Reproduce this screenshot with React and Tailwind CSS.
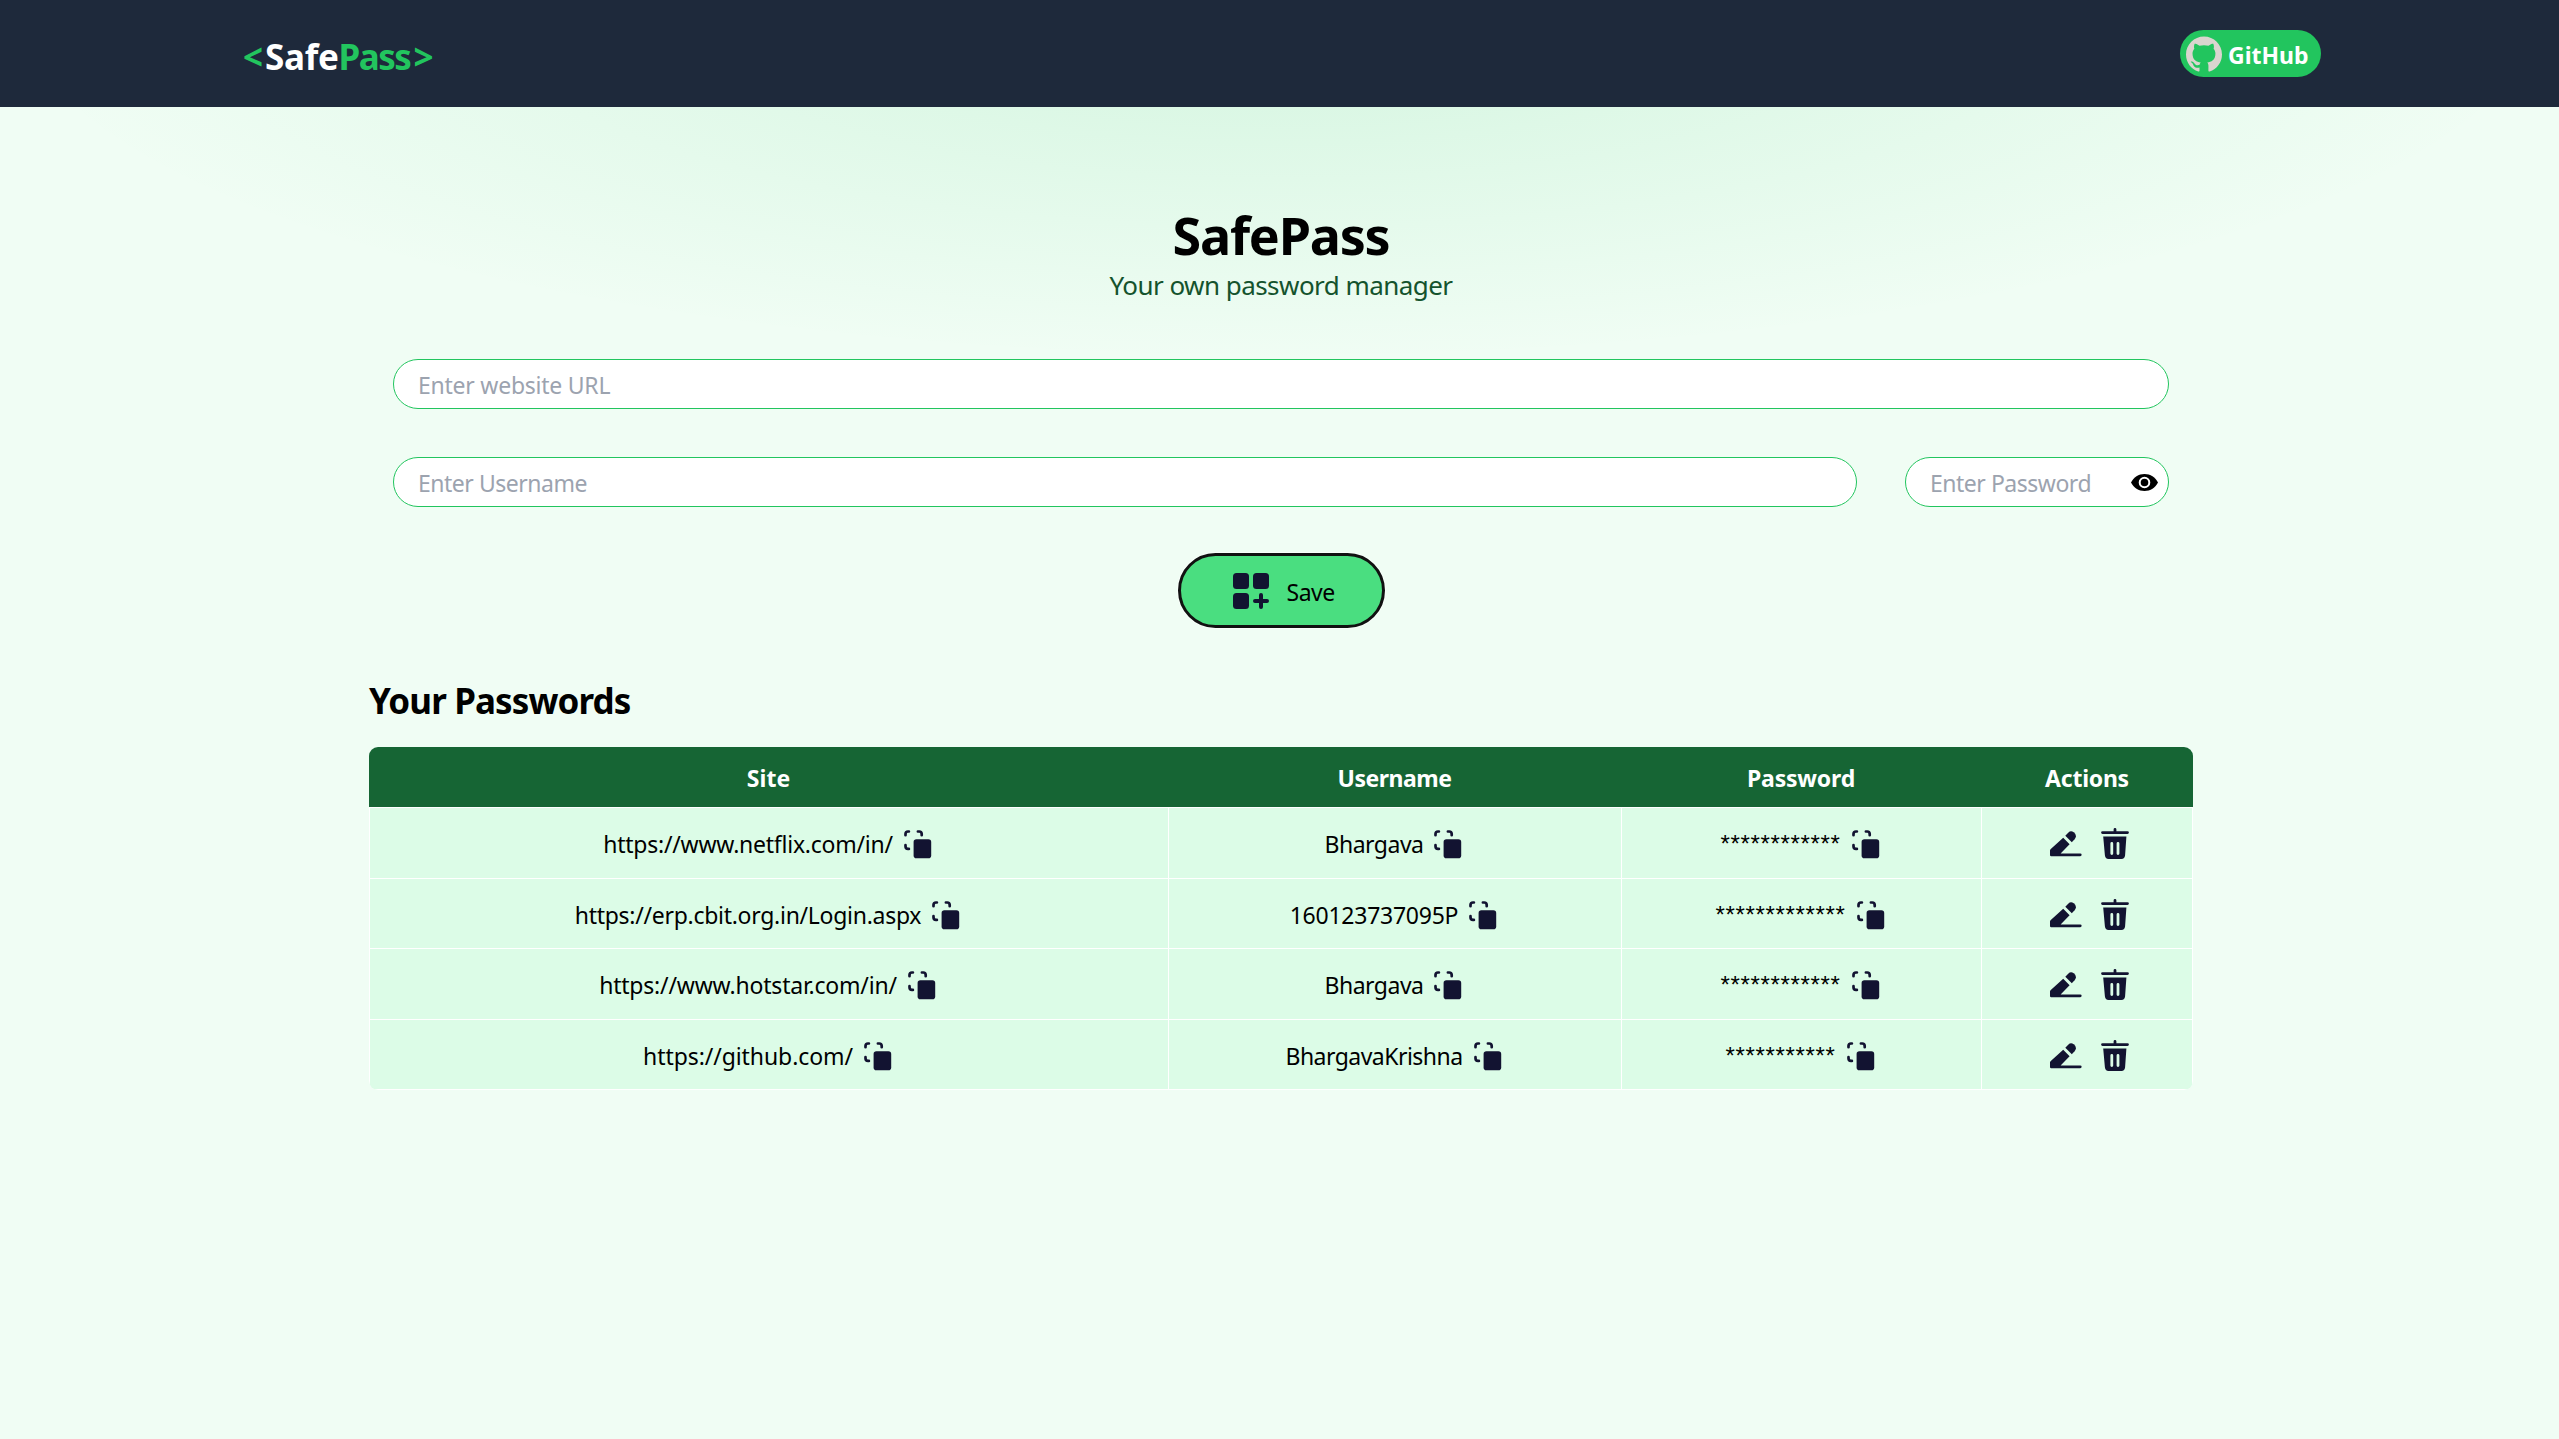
import React from "react";

const INK = "#121331";

function GithubMark() {
  return (
    <svg viewBox="0 0 24 24" className="h-9 w-9 shrink-0" fill="#dad5cf">
      <path d="M12 .297c-6.63 0-12 5.373-12 12 0 5.303 3.438 9.8 8.205 11.385.6.113.82-.258.82-.577 0-.285-.01-1.04-.015-2.04-3.338.724-4.042-1.61-4.042-1.61C4.422 18.07 3.633 17.7 3.633 17.7c-1.087-.744.084-.729.084-.729 1.205.084 1.838 1.236 1.838 1.236 1.07 1.835 2.809 1.305 3.495.998.108-.776.417-1.305.76-1.605-2.665-.3-5.466-1.332-5.466-5.93 0-1.31.465-2.38 1.235-3.22-.135-.303-.54-1.523.105-3.176 0 0 1.005-.322 3.3 1.23.96-.267 1.98-.399 3-.405 1.02.006 2.04.138 3 .405 2.28-1.552 3.285-1.23 3.285-1.23.645 1.653.24 2.873.12 3.176.765.84 1.23 1.91 1.23 3.22 0 4.61-2.805 5.625-5.475 5.92.42.36.81 1.096.81 2.22 0 1.606-.015 2.896-.015 3.286 0 .315.21.69.825.57C20.565 22.092 24 17.592 24 12.297c0-6.627-5.373-12-12-12" />
    </svg>
  );
}

function EyeIcon() {
  return (
    <svg viewBox="0 0 27 17" className="h-[17px] w-[27px] shrink-0">
      <path d="M0 8.5C2.6 3.3 7.6 0 13.5 0S24.4 3.3 27 8.5C24.4 13.7 19.4 17 13.5 17S2.6 13.7 0 8.5Z" fill="#000" />
      <circle cx="13.5" cy="8.5" r="4.8" fill="none" stroke="#fff" strokeWidth="2" />
    </svg>
  );
}

function AddIcon() {
  return (
    <svg viewBox="0 0 36 36" className="h-9 w-9 shrink-0" fill={INK}>
      <rect x="0" y="0" width="16" height="16" rx="3.5" />
      <rect x="20" y="0" width="16" height="16" rx="3.5" />
      <rect x="0" y="20" width="16" height="16" rx="3.5" />
      <path d="M28 22v12M22 28h12" stroke={INK} strokeWidth="4" strokeLinecap="round" />
    </svg>
  );
}

function CopyIcon() {
  return (
    <svg viewBox="0 0 28 29" className="mt-[3px] mr-[3px] ml-[11px] h-[29px] w-7 shrink-0">
      <path
        d="M1.5 5.2V4Q1.5 1.5 4 1.5H4.9M13.9 1.5H15.2Q17.7 1.5 17.7 4V5.2M1.5 15.2V16.3Q1.5 18.9 4 18.9H4.9"
        fill="none"
        stroke={INK}
        strokeWidth="2.7"
        strokeLinecap="round"
      />
      <rect x="9.6" y="9.2" width="17.6" height="19" rx="2.8" fill={INK} />
    </svg>
  );
}

function EditIcon() {
  return (
    <svg viewBox="0 0 32 26" className="mt-[2px] h-[26px] w-8 shrink-0" fill={INK}>
      <path d="M13.2 6.8 19.6 13.2 10.6 22.4H30.2A1.45 1.45 0 0 1 30.2 25.3H1.2Q0 25.3 0 24.1V19.6Q0 18.6.8 17.9Z" />
      <path d="M15.3 4.8 18.2 1.7Q20.7-.9 23.7 1.2L24.9 2.6Q27 5.4 24.6 8.2L21.8 11.2Z" />
    </svg>
  );
}

function TrashIcon() {
  return (
    <svg viewBox="0 0 28 31" className="mt-px h-[31px] w-7 shrink-0" fill={INK}>
      <path d="M1.5 4.6H26.5M14 1.4V4.6" stroke={INK} strokeWidth="2.8" strokeLinecap="round" />
      <path
        fillRule="evenodd"
        d="M2.2 8.6H25.4L24.1 27.3Q23.8 31 20.4 31H7.6Q4.2 31 3.9 27.3ZM10.8 14Q9.4 14 9.4 15.4V25.6Q9.4 27 10.8 27T12.2 25.6V15.4Q12.2 14 10.8 14ZM17 14Q15.6 14 15.6 15.4V25.6Q15.6 27 17 27T18.4 25.6V15.4Q18.4 14 17 14Z"
      />
    </svg>
  );
}

const rows = [
  {
    site: "https://www.netflix.com/in/",
    siteClass: "tracking-[-0.24px]",
    user: "Bhargava",
    userClass: "tracking-[-0.5px]",
    stars: 12,
    height: "h-[71px]",
  },
  {
    site: "https://erp.cbit.org.in/Login.aspx",
    siteClass: "tracking-[-0.28px]",
    user: "160123737095P",
    userClass: "tracking-[-0.25px]",
    stars: 13,
    height: "h-[70px]",
  },
  {
    site: "https://www.hotstar.com/in/",
    siteClass: "tracking-[-0.2px]",
    user: "Bhargava",
    userClass: "tracking-[-0.5px]",
    stars: 12,
    height: "h-[71px]",
  },
  {
    site: "https://github.com/",
    siteClass: "tracking-[-0.08px]",
    user: "BhargavaKrishna",
    userClass: "tracking-[-0.53px]",
    stars: 11,
    height: "h-[71px] border-b",
  },
];

const columns = "grid grid-cols-[799px_453px_360px_212px]";
const cell = "flex items-center justify-center border-l border-white";
const field = "flex h-[50px] items-center rounded-full border border-[#22c55e] bg-white";

function Placeholder({ children, className }) {
  return <span className={"pt-[2px] text-[23px] leading-none text-[#9ca3af] " + className}>{children}</span>;
}

export default function App() {
  return (
    <div className="flex h-[1439px] w-[2559px] flex-col overflow-hidden bg-[#f0fdf4] bg-[radial-gradient(100%_50%_at_50%_0%,rgba(34,197,94,0.145)_0,rgba(34,197,94,0)_50%)] font-['Noto_Sans',sans-serif] text-black">
      <nav className="flex h-[107px] shrink-0 items-center justify-between bg-[#1e293b] pr-[238px] pl-[243px] font-bold text-white">
        <div className="flex pt-[6px] text-[35px] leading-none">
          <span className="text-[#22c55e]">&lt;</span>
          <span className="ml-[2px] tracking-[-0.3px]">Safe</span>
          <span className="tracking-[-1.5px] text-[#22c55e]">Pass</span>
          <span className="ml-[3px] text-[#22c55e]">&gt;</span>
        </div>
        <div className="flex h-[47px] w-[141px] items-center rounded-full bg-[#22c55e] pl-[6px]">
          <GithubMark />
          <span className="ml-[6px] pt-[4px] text-[23px] leading-none">GitHub</span>
        </div>
      </nav>

      <main className="ml-[369px] flex w-[1824px] flex-col pt-[98px]">
        <h1 className="h-[60px] text-center text-[52px] leading-[60px] font-bold tracking-[-1.2px]">SafePass</h1>
        <p className="h-[40px] text-center text-[26px] leading-[40px] tracking-[-0.55px] text-[#14532d]">
          Your own password manager
        </p>

        <div className="mt-[54px] flex flex-col items-center px-6">
          <div className={field + " w-full pl-[24px]"}>
            <Placeholder className="tracking-[-0.24px]">Enter website URL</Placeholder>
          </div>
          <div className="mt-12 flex w-full gap-12">
            <div className={field + " grow pl-[24px]"}>
              <Placeholder className="tracking-[-0.48px]">Enter Username</Placeholder>
            </div>
            <div className={field + " w-[264px] justify-between pr-[10px] pl-[24px]"}>
              <Placeholder className="tracking-[-0.48px]">Enter Password</Placeholder>
              <EyeIcon />
            </div>
          </div>
          <button className="mt-[46px] flex h-[75px] w-[207px] items-center rounded-full border-[3px] border-[#111] bg-[#4ade80] pl-[52px] ring-1 ring-white/60">
            <AddIcon />
            <span className="ml-[18px] pt-[3px] text-[23px] leading-none tracking-[-0.5px]">Save</span>
          </button>
        </div>

        <h2 className="mt-[53px] h-[40px] text-[35px] leading-[40px] font-bold tracking-[-0.88px]">Your Passwords</h2>

        <div className="mt-[26px] w-full overflow-hidden rounded-[9px]">
          <div className={columns + " h-[60px] items-center bg-[#166534] pt-[2px] text-center text-[23px] font-bold text-white"}>
            <span>Site</span>
            <span className="tracking-[-0.5px]">Username</span>
            <span className="tracking-[-0.2px]">Password</span>
            <span className="tracking-[-0.25px]">Actions</span>
          </div>
          {rows.map((row) => (
            <div key={row.site} className={columns + " border-t border-white bg-[#dcfce7] text-[23px] leading-none " + row.height}>
              <div className={cell}>
                <span className={"pt-[3px] " + row.siteClass}>{row.site}</span>
                <CopyIcon />
              </div>
              <div className={cell}>
                <span className={"pt-[3px] " + row.userClass}>{row.user}</span>
                <CopyIcon />
              </div>
              <div className={cell}>
                <span className="pt-[2px] font-['Liberation_Sans',sans-serif] text-[24px] tracking-[0.67px]">
                  {"*".repeat(row.stars)}
                </span>
                <CopyIcon />
              </div>
              <div className={cell + " gap-[19px] border-r pl-[5px]"}>
                <EditIcon />
                <TrashIcon />
              </div>
            </div>
          ))}
        </div>
      </main>
    </div>
  );
}
